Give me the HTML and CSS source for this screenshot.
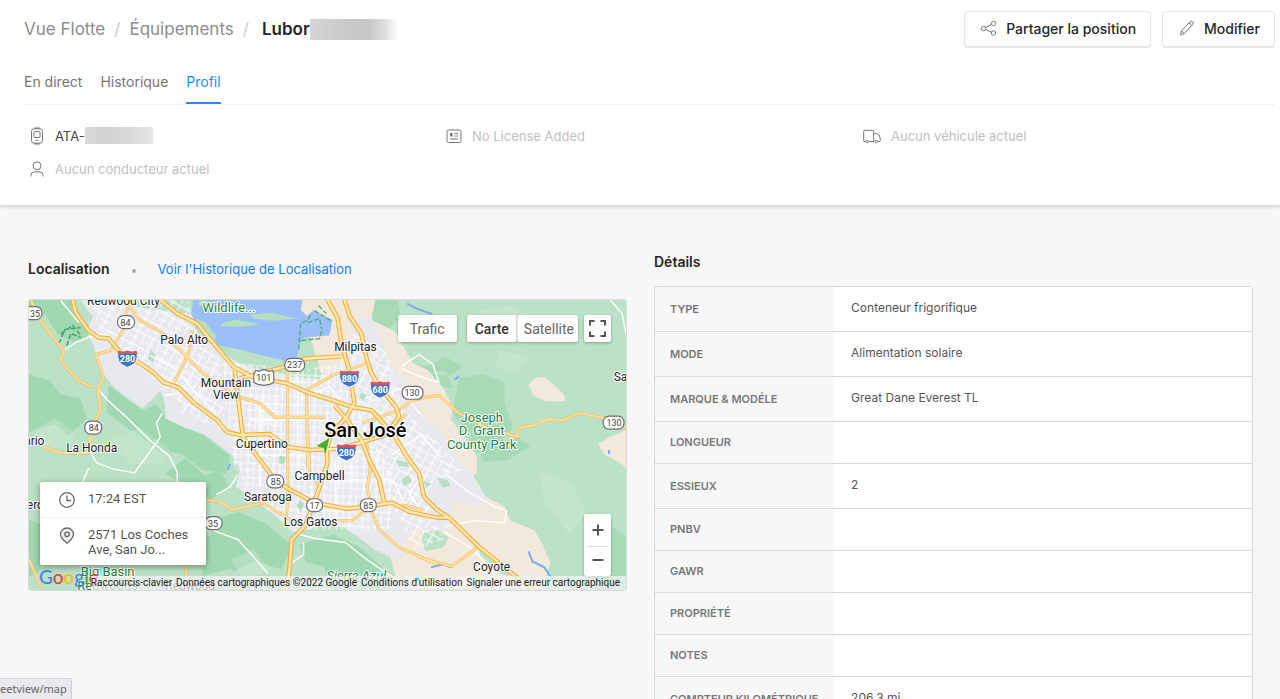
FILE: index.html
```
<!DOCTYPE html>
<html lang="fr">
  <head>
    <meta charset="UTF-8" />
    <meta name="viewport" content="width=device-width, initial-scale=1.0" />
    <title>Profil de l'équipement</title>
    <link rel="stylesheet" href="styles.css">
  </head>
  <body>
    <header class="header">
      <div class="header-top">
        <nav class="breadcrumb">
          <a href="#">Vue Flotte</a>
          <span class="slash">/</span>
          <a href="#">Équipements</a>
          <span class="slash">/</span>
          <span class="current">Lubor<span class="mask mask-name"></span></span>
        </nav>
        <div class="actions">
          <button class="button" type="button">
            <svg width="18" height="18" viewBox="0 0 18 18"><circle cx="3.5" cy="9.5" r="2.2"/><circle cx="13.5" cy="4.5" r="2.2"/><circle cx="13.5" cy="14" r="2.2"/><path d="M5.5 8.5l6-3M5.5 10.5l6 2.7"/></svg>
            Partager la position
          </button>
          <button class="button" type="button">
            <svg width="18" height="18" viewBox="0 0 18 18"><path d="M2.5 15.8l1-4L12 2.9a1.8 1.8 0 0 1 2.8 2.5L6.3 14.5zM3.5 11.8l2.8 2.7M11 4l2.8 2.6"/></svg>
            Modifier
          </button>
        </div>
      </div>

      <nav class="tabs">
        <a class="tab" href="#">En direct</a>
        <a class="tab" href="#">Historique</a>
        <a class="tab active" href="#">Profil</a>
      </nav>

      <div class="info">
        <div class="info-item strong">
          <svg width="16" height="18" viewBox="0 0 16 18"><rect x="2.5" y="1.8" width="11" height="14.4" rx="2.5"/><path d="M5 1h6M5 17h6M6.5 13.2h3"/><rect x="5" y="4.5" width="6" height="6" rx="1"/></svg>
          <span>ATA-</span><span class="mask mask-id"></span>
        </div>
        <div class="info-item">
          <svg width="16" height="18" viewBox="0 0 16 18"><rect x="1" y="3" width="14" height="12.5" rx="1.5"/><path d="M8.5 6.5H12M8.5 9H12M4 12h8"/><path class="solid" d="M4 6h2.5v3.5H4z"/></svg>
          <span>No License Added</span>
        </div>
        <div class="info-item">
          <svg width="18" height="18" viewBox="0 0 18 18"><path d="M3 14.5H1.5a.8.8 0 0 1-.8-.8V4.300a1 1 0 0 1 1-1h8a1 1 0 0 1 1 1v10.200M5.500 14.500h6M10.700 6.500h2.800q3.700.700 3.700 5v2.200q0 .8-.8.8H15"/><circle cx="4.200" cy="14.500" r="1.300"/><circle cx="13.500" cy="14.500" r="1.300"/></svg>
          <span>Aucun véhicule actuel</span>
        </div>
        <div class="info-item">
          <svg width="16" height="18" viewBox="0 0 16 18"><circle cx="8" cy="5.800" r="4"/><path d="M1.800 16.500v-1q0-3.700 4-3.700h4.400q4 0 4 3.700v1"/></svg>
          <span>Aucun conducteur actuel</span>
        </div>
      </div>
    </header>

    <main class="content">
      <section class="location">
        <div class="location-head">
          <h2>Localisation</h2>
          <span class="dot"></span>
          <a href="#">Voir l'Historique de Localisation</a>
        </div>

        <div class="map">
          <svg class="map-canvas" viewBox="28 299 600 292" preserveAspectRatio="xMidYMid slice">
            <defs>
              <pattern id="streets" width="17" height="14" patternUnits="userSpaceOnUse" patternTransform="rotate(28)">
                <path d="M0 3h17M0 10h9M5 0v14M13 3v11" fill="none" stroke="#fff" stroke-width="1"/>
              </pattern>
              <pattern id="grid" width="13" height="15" patternUnits="userSpaceOnUse" patternTransform="rotate(2)">
                <path d="M0 4h13M0 11h8M4 0v15M10 4v11" fill="none" stroke="#fff" stroke-width="1"/>
              </pattern>
              <g id="interstate">
                <path d="M-9-8Q-5-6 0-8 5-6 9-8 13 5 0 9-13 5-9-8z" fill="#3f74c6" stroke="#fff"/>
                <path d="M-9-8Q-5-6 0-8 5-6 9-8L10-4.500h-20z" fill="#dd5459"/>
              </g>
              <path id="hw280" d="M72 299L75 312 88 330 98 337 108 338 120 352 135 360 153 372 163 382 178 387 193 402 217 420 227 432 240 435 270 434 288 447 310 450 337 449 360 443 383 436 394 425 400 416 397 407 383 390 372 373 367 357 362 333 350 315 345 299"/>
              <path id="hw880" d="M328 299L338 317 342 343 350 370 355 403 347 417 332 433 327 450 328 463 320 487 315 502 305 527 292 540 290 567 287 591"/>
              <path id="hw101" d="M160 299L177 313 197 323 217 347 233 366 253 377 287 383 310 393 333 400 353 407 372 410 384 423 396 437 408 457 420 473 425 497 438 510 450 518 480 547 517 577 537 592"/>
              <path id="hw85" d="M235 370L238 397 243 437 260 460 275 480 287 488 315 503 347 509 367 507 393 503 410 512 438 518 452 518"/>
              <path id="hw87" d="M335 405L348 420 362 440 370 460 380 480 385 503"/>
              <path id="hw237" d="M240 378L263 372 283 367 307 358 342 356"/>
            </defs>

            <path fill="#bbe2c6" d="M28 299h600v292H28z"/>

            <!-- forests -->
            <g fill="#a0d8b1">
              <path d="M28 299h42l5 20 15 14-14 10-20-10-12-20-16 4zM28 374l20 6 12 14 20 4 6 20-18 18-14-12-26 8zM108 385l20 15 14 10 14-6 12 16 34 14 28 22-4 18-24-4-20-16-24-4-28-20-24-18z"/>
              <path d="M165 474l20-16 20 18 14-6 10 16-18 14-16-8zM212 520l26-8 28 12 26 22-10 24-28-8-20 10-24-18zM300 545l34-10 28 14 20 18 10 24h-60l-8-24-18-4zM28 520l12 5v45l-12 8zM206 535l16 10 8 24-28 8z"/>
              <path d="M370 299h28l4 18-14 12-14-8zM404 368l28-4 14-8 18 10-14 10-20-4zM460 378l24-4 22 8 0 20 8 26-16 18-20 8-10-20-14-22zM480 444l40-6 12 8-22 14-26 2zM606 522l22 15v54h-34l-6-26zM404 406l16-20 34 2-8-18-32 6z" opacity=".75"/>
            </g>
            <g fill="#cdebd4" opacity=".4">
              <path d="M32 430l22-12 20 14-4 16-28 2zM110 440l30-12 30 22-8 14-32 0zM230 560l24-10 16 20-24 12zM480 310l34-6 32 18-20 24-22-6zM540 470l34 14 14 30-18 20-24-32zM500 350l32 6-12 18-24-8z"/>
            </g>

            <!-- hills and dry land -->
            <path fill="#f2e9dc" d="M300 299h76l-4 20 24 12 18 32 14 6 16 18 10 20-2 12 12 16 14 22 0 16-8 8 10 12 26 14 6 14 24 10 8 14 8 18-8 26H400l-10-35-30-20-20-100-30-100zM530 385q6-10 16-8l12 10 8 8 1 6h-20l-12-6zM600 444l10-6 18-8v38l-8-6-14-8z"/>
            <path fill="#bbe2c6" d="M422 534l16-4 12 8-6 10-18 4zM480 550l20 12 12 16-10-4-20-18z"/>

            <!-- urban area -->
            <path id="city" fill="#e7e9ee" d="M80 299l6 9 6 8-6 14 7 15 4 15 6 15 12 13 15 12 12 8 11-10 7-8 5 15v13l20 10 20 7 27 20 8 15-4 17 19 13 25 20 13 13 17-3 15-5 20 3 17 12 13 10 15 7 12 6 2-20 10-14 34 2 8-12-4-18 24 6 14-4-12-22-22-26-12-22-20-16-16-32-18-22-10-30-8-16h-25l8 20-6 22-30 20-40-4-40-12-22-14-10-20-4-14z"/>
            <path fill="url(#streets)" d="M92 299h96l10 40 22 20 6 70-30-10-30-30-38-30-30-30zM350 330l36 20 20 60 60 60-30 10-10 20 20 40-30 10-30-60-30-80z"/>
            <path fill="url(#grid)" d="M222 360l80 10 50-10 10 60 30 50 0 60-60 0-30 0-50-30-20-40-4-30z"/>
            <path fill="#fff" opacity=".25" d="M255 395h25v30h-25zM330 460h28v25h-28z"/>
            <g fill="#b5dfc0">
              <path d="M150 350l5 4-2 8-5-3zM280 455l6 2-2 8-5-2zM396 460l12 2 2 5-10-1zM402 480l7-5 4 7-8 4zM300 500l5 4-4 8-4-6zM362 392l5 3-3 5-4-3zM438 478l10 2 4 6-8 2zM424 481l8 3-4 4z"/>
              <path d="M216 347l10-4 6 8-8 2z"/>
            </g>

            <!-- the bay -->
            <path fill="#9bbff8" d="M193 299l-2 14 6 16 8 12 15 4 24 5 18 5 23 5 12-2 3-13 4-8 26-2 3-16-12-6-12-12-10-2z"/>
            <path fill="#b5dfc0" d="M196 318l10 4 10 14-2 8-12-6-8-12zM222 323l12-4 14 2 12 3-16 2-22 0zM250 314l22-2 24 6-24 2-18-2zM200 299l18 3-6 6-14-4z"/>
            <path fill="#f2e9dc" d="M303 299h24l6 20-18-10-8 6-6-6z"/>
            <path d="M299 349l2-26 8-4 2-5M302 340l18-2 3-10M308 322l12-4 2 10M315 310l16 10M319 305l8 8" fill="none" stroke="#4cae72" stroke-width="1.300" stroke-dasharray="5 2"/>
            <path d="M58 343l6-14 16-2M66 345l4-12 10 4M60 333l12-8 8 10" fill="none" stroke="#3fa565" stroke-width="1.500" stroke-dasharray="5 2"/>
            <path d="M408 303l12 6 12 4 6 8M456 379l4-3M530 552l4 10 12 6 8 12M432 568l12-3 8 3M290 562l3-14M228 470l2-6M611 450v4" fill="none" stroke="#7fabf3" stroke-width="2"/>

            <!-- small roads -->
            <g fill="none" stroke="#fff" stroke-width="1.400" stroke-linejoin="round">
              <path d="M63 350l12-8 14-6 16-3M97 388l10 12 20 18 22 22 20 16 8 16 0 14M150 451l-16 22-22-4-16-6-8-14M88 468l-6 14M150 451l10-14-4-14 6-10M198 520l18 12 22 8 18 20 12 14M216 495l14-8 8-12M300 535l16 4 30 4 20 16 20 14 30 18"/>
              <path d="M402 368l18 8 20 6-6-18-14-10-18 12M448 475l20 16 28 16 12 4-2 12-30-2-30 6M612 299l12 14 4 20M420 480l-10 14 12 16M445 532l30 18 20 24 4 18M290 565l14-10 0-12M60 300l18 22"/>
              <path d="M150 355l26 14 20 24 18 18 6 18M165 395l14-2M205 385l-24 28M300 400l30-14 14 18M375 400l26-12 20 26M392 455l30-20 20 22M350 480h44l14 30M245 455h60M250 420h55M260 405v80M298 370v110M336 460v64"/>
            </g>

            <!-- main roads -->
            <g fill="none" stroke-linejoin="round">
              <g stroke="#f4bd5c" stroke-width="3">
                <path id="roads" d="M30 300l10 20 7 10 16 20-3 10 17 20 15 7M128 304l-6 26-12 20-15 4 8 23-6 11 3 22-8 15-4 28-28 0-17-6M127 304l13 16 23 13 20 20 20 20 17 12 20 12 20 6 15 14 50 0M288 363v140l-2 18M308 468l-1-78 26-15 34-12M308 430l2 40 10 18M363 423l37-13 13-10 14-3 13-2 20 18 27 14 33 10 0-9 15-3 15-6 15 1 15-7 23 4 24 10M418 557l35 10 27-20M367 440l4 30-3 17 5 26 7 17 20 18 38 17M337 521h16l14-11M207 500l13 2 13 8 30-7 24 15 18 9M402 505l22 5M192 330l-4 24-14 28M185 566l3 22M28 560l12 28M383 436l24-22"/>
              </g>
              <g stroke="#fde0a3" stroke-width="1.700">
                <use href="#roads"/>
              </g>
              <g stroke="#f5ab38" stroke-width="4.600">
                <use href="#hw280"/><use href="#hw880"/><use href="#hw101"/><use href="#hw85"/><use href="#hw87"/><use href="#hw237"/>
              </g>
              <g stroke="#ffe9b3" stroke-width="2.400">
                <use href="#hw280"/><use href="#hw880"/><use href="#hw101"/><use href="#hw85"/><use href="#hw87"/><use href="#hw237"/>
              </g>
            </g>

            <!-- shields -->
            <g fill="#fff" stroke="#6d6f73" stroke-width="1.200">
              <rect x="22" y="306" width="19" height="13" rx="6"/>
              <rect x="117" y="315" width="17" height="13" rx="6"/>
              <rect x="84" y="421" width="17" height="13" rx="6"/>
              <rect x="285" y="358" width="20" height="13" rx="6"/>
              <rect x="403" y="386" width="21" height="13" rx="6"/>
              <rect x="605" y="416" width="21" height="13" rx="6"/>
              <rect x="267" y="475" width="17" height="13" rx="6"/>
              <rect x="307" y="499" width="16" height="13" rx="6"/>
              <rect x="361" y="499" width="16" height="13" rx="6"/>
              <rect x="205" y="517" width="17" height="13" rx="6"/>
              <path d="M256 370l3 1 5-2 5 2 4-1 1 4v8l-4 2-6 1-6-1-4-2v-8z"/>
            </g>
            <g class="shield-text">
              <text x="34" y="316">35</text>
              <text x="125" y="325">84</text>
              <text x="93" y="431">84</text>
              <text x="295" y="368">237</text>
              <text x="264" y="381">101</text>
              <text x="413" y="396">130</text>
              <text x="616" y="426">130</text>
              <text x="276" y="485">85</text>
              <text x="315" y="509">17</text>
              <text x="369" y="509">85</text>
              <text x="213" y="527">35</text>
            </g>
            <use href="#interstate" x="127" y="358"/>
            <use href="#interstate" x="350" y="378"/>
            <use href="#interstate" x="381" y="389"/>
            <use href="#interstate" x="347" y="452"/>
            <g class="shield-text light">
              <text x="127" y="362">280</text>
              <text x="350" y="382">880</text>
              <text x="381" y="393">680</text>
              <text x="347" y="456">280</text>
            </g>

            <g class="place">
              <text x="123" y="304">Redwood City</text>
              <text x="184" y="343">Palo Alto</text>
              <text x="226" y="387">Mountain</text>
              <text x="226" y="399">View</text>
              <text x="356" y="351">Milpitas</text>
              <text x="262" y="448">Cupertino</text>
              <text x="320" y="480">Campbell</text>
              <text x="268" y="501">Saratoga</text>
              <text x="311" y="526">Los Gatos</text>
              <text x="91" y="452">La Honda</text>
              <text x="493" y="572">Coyote</text>
              <text x="631" y="381">Santa</text>
              <text x="28" y="445">orario</text>
              <text x="31" y="509">dero</text>
              <text x="190" y="591">Redwood</text>
            </g>
            <g class="place park">
              <text x="229" y="311">Wildlife...</text>
              <text x="483" y="422">Joseph</text>
              <text x="483" y="435">D. Grant</text>
              <text x="483" y="449">County Park</text>
              <text x="107" y="577">Big Basin</text>
              <text x="107" y="591">Redwoods</text>
              <text x="357" y="581" font-style="italic">Sierra Azul</text>
            </g>
            <text class="place city" x="366" y="437">San José</text>
            <path d="M330 438l-4 16-2-6-7-2z" fill="#43b02a"/>
          </svg>

          <div class="map-controls">
            <button class="map-button" type="button">Trafic</button>
            <div class="map-types">
              <button class="map-button selected" type="button">Carte</button>
              <button class="map-button" type="button">Satellite</button>
            </div>
            <button class="map-button square" type="button" aria-label="Plein écran">
              <svg width="17" height="17" viewBox="0 0 17 17"><path d="M1 5.500V1h4.500M11.500 1H16v4.500M16 11.500V16h-4.500M5.500 16H1v-4.500"/></svg>
            </button>
          </div>

          <div class="zoom">
            <button type="button" aria-label="Zoom avant"><svg width="12" height="12" viewBox="0 0 12 12"><path d="M6 .5v11M.5 6h11"/></svg></button>
            <button type="button" aria-label="Zoom arrière"><svg width="12" height="12" viewBox="0 0 12 12"><path d="M.5 6h11"/></svg></button>
          </div>

          <div class="map-card">
            <div class="card-row">
              <svg width="18" height="18" viewBox="0 0 18 18"><circle cx="9" cy="9" r="7.300"/><path d="M9 4.500V9.500h4"/></svg>
              <span>17:24 EST</span>
            </div>
            <div class="card-row">
              <svg width="18" height="18" viewBox="0 0 18 18"><path class="pin" d="M9 16.200Q2.500 11 2.500 7.300a6.500 6.300 0 0 1 13 0Q15.500 11 9 16.200z"/><circle cx="9" cy="7.300" r="2.200"/></svg>
              <span>2571 Los Coches<br>Ave, San Jo...</span>
            </div>
          </div>

          <div class="google"><span class="blue">G</span><span class="red">o</span><span class="yellow">o</span><span class="blue">g</span><span class="green">l</span><span class="red">e</span></div>

          <div class="attribution">
            <a href="#">Raccourcis-clavier</a>
            <span>Données cartographiques ©2022 Google</span>
            <a href="#">Conditions d'utilisation</a>
            <a href="#">Signaler une erreur cartographique</a>
          </div>
        </div>
      </section>

      <section class="details">
        <h2>Détails</h2>
        <table class="details-table">
          <tr><th scope="row">TYPE</th><td>Conteneur frigorifique</td></tr>
          <tr><th scope="row">MODE</th><td>Alimentation solaire</td></tr>
          <tr><th scope="row">MARQUE &amp; MODÉLE</th><td>Great Dane Everest TL</td></tr>
          <tr><th scope="row">LONGUEUR</th><td></td></tr>
          <tr><th scope="row">ESSIEUX</th><td>2</td></tr>
          <tr><th scope="row">PNBV</th><td></td></tr>
          <tr><th scope="row">GAWR</th><td></td></tr>
          <tr><th scope="row">PROPRIÉTÉ</th><td></td></tr>
          <tr><th scope="row">NOTES</th><td></td></tr>
          <tr><th scope="row">COMPTEUR KILOMÉTRIQUE</th><td>206.3 mi</td></tr>
        </table>
      </section>
    </main>

    <div class="status">eetview/map</div>
  </body>
</html>
```
FILE: styles.css
```
* {
  box-sizing: border-box;
}
html {
  scrollbar-width: none;
}
body {
  height: 100vh;
  margin: 0;
  overflow: hidden auto;
  scrollbar-width: none;
  background: #f7f7f7;
  color: #262626;
  font-family: Inter, "Liberation Sans", sans-serif;
  font-size: 14px;
  line-height: 20px;
}
a {
  color: #1080f0;
  text-decoration: none;
}
button {
  font-family: inherit;
  cursor: pointer;
}
svg {
  fill: none;
  stroke: #777;
  flex: none;
}
h2 {
  margin: 0;
  font-size: 14px;
  font-weight: 600;
}

/* header */
.header {
  padding: 11px 5px 20px 24px;
  background: #fff;
  border-bottom: 1px solid #d8d8d8;
  box-shadow: 0 1px 4px rgba(0, 0, 0, 0.15);
}
.header-top {
  display: flex;
  align-items: center;
  justify-content: space-between;
}
.breadcrumb {
  display: flex;
  align-items: center;
  gap: 9px;
  font-size: 17px;
}
.breadcrumb a {
  color: #8c8c8c;
}
.slash {
  color: #ccc;
}
.current {
  display: flex;
  align-items: center;
  margin-left: 4px;
  font-weight: 600;
}
.mask {
  display: inline-block;
}
.mask-name {
  width: 88px;
  height: 21px;
  background: linear-gradient(90deg, #d6d6d6, #c9c9c9 40%, #c6c6c6 65%, #ddd 85%, #fff);
}
.mask-id {
  width: 68px;
  height: 17px;
  background: linear-gradient(90deg, #d9d9d9, #d2d2d2 30%, #d8d8d8 60%, #e6e6e6);
}
.actions {
  display: flex;
  gap: 11px;
}
.button {
  display: flex;
  align-items: center;
  gap: 8px;
  height: 36px;
  padding: 0 14px 2px 15px;
  background: #fff;
  border: 1px solid #e6e6e6;
  border-radius: 4px;
  box-shadow: 0 1px 1px rgba(0, 0, 0, 0.1);
  color: #262626;
  font-size: 14px;
  font-weight: 500;
}
.tabs {
  display: flex;
  gap: 18px;
  margin-top: 25px;
  border-bottom: 1px solid #f0f0f0;
}
.tab {
  padding-bottom: 10px;
  border-bottom: 2px solid transparent;
  color: #777;
}
.tab.active {
  border-color: #1890ff;
  color: #1890ff;
}
.info {
  display: grid;
  grid-template-columns: repeat(3, 1fr);
  padding-top: 14px;
  font-size: 13px;
}
.info-item {
  display: flex;
  align-items: center;
  gap: 10px;
  height: 33px;
  padding-left: 5px;
  color: #bfbfbf;
}
.info-item.strong {
  color: #444;
}
.info-item .mask {
  margin-left: -10px;
}
.info-item .solid {
  fill: #777;
  stroke: none;
}

/* content */
.content {
  display: grid;
  grid-template-columns: 1fr 1fr;
  gap: 27px;
  padding: 46px 27px 0 28px;
}
.location {
  padding-top: 7px;
}
.location-head {
  display: flex;
  align-items: center;
  gap: 22px;
  margin-bottom: 20px;
}
.location-head a {
  font-size: 13px;
}
.dot {
  width: 4px;
  height: 4px;
  margin-top: 4px;
  border-radius: 50%;
  background: #aaa;
}

.map {
  position: relative;
  height: 292px;
  overflow: hidden;
  border: 1px solid #d9d9d9;
  border-radius: 3px;
  font-family: Roboto, "Liberation Sans", sans-serif;
}
.map-canvas {
  display: block;
  width: 100%;
  height: 100%;
  stroke: none;
}
.place {
  fill: #202124;
  stroke: #fff;
  stroke-width: 2px;
  paint-order: stroke;
  stroke-linejoin: round;
  text-anchor: middle;
  font-size: 12px;
}
.park {
  fill: #1e8040;
  font-size: 13px;
}
.city {
  fill: #000;
  font-size: 20px;
  font-weight: 500;
}
.shield-text {
  fill: #444;
  text-anchor: middle;
  font-size: 9px;
}
.shield-text.light {
  fill: #fff;
  font-weight: 700;
}
.map-controls {
  position: absolute;
  top: 15px;
  right: 15px;
  display: flex;
  gap: 6px;
}
.map-types {
  display: flex;
  margin-left: 4px;
}
.map-button {
  height: 27px;
  padding: 0 7px;
  background: #fff;
  border: 0;
  border-radius: 2px;
  box-shadow: 0 1px 3px rgba(0, 0, 0, 0.3);
  color: #666;
  font-size: 14px;
}
.map-controls > .map-button {
  padding: 0 12px;
}
.map-types .map-button + .map-button {
  border-left: 1px solid #ddd;
  padding: 0 4px 0 6px;
}
.map-button.selected {
  padding: 0 8px;
  color: #333;
  font-weight: 500;
}
.map-controls > .square {
  display: flex;
  align-items: center;
  justify-content: center;
  width: 27px;
  padding: 0;
}
.square svg {
  stroke: #555;
  stroke-width: 2;
}
.zoom {
  position: absolute;
  right: 15px;
  bottom: 14px;
  width: 27px;
  padding: 0 3px;
  background: #fff;
  border-radius: 2px;
  box-shadow: 0 1px 3px rgba(0, 0, 0, 0.3);
}
.zoom button {
  display: flex;
  align-items: center;
  justify-content: center;
  width: 100%;
  height: 32px;
  padding: 0;
  background: none;
  border: 0;
}
.zoom button + button {
  height: 30px;
  padding-bottom: 4px;
  border-top: 1px solid #ddd;
}
.zoom svg {
  stroke: #555;
  stroke-width: 2;
}
.map-card {
  position: absolute;
  left: 11px;
  bottom: 25px;
  width: 166px;
  background: #fff;
  border-radius: 2px;
  box-shadow: 0 2px 6px rgba(0, 0, 0, 0.4);
  color: #555;
  font-size: 13px;
  line-height: 15px;
  white-space: nowrap;
}
.card-row {
  display: flex;
  gap: 12px;
  padding: 9px 18px 8px;
}
.card-row + .card-row {
  border-top: 1px solid #eee;
}
.card-row svg {
  stroke-width: 1.3;
  stroke: #666;
}
.card-row .pin {
  fill: #eee;
}
.google {
  position: absolute;
  left: 10px;
  bottom: 1px;
  font-family: Lato, Roboto, sans-serif;
  font-size: 19px;
  font-weight: 500;
  line-height: 24px;
}
.blue {
  color: #4285f4;
}
.red {
  color: #ea4335;
}
.yellow {
  color: #fbbc05;
}
.green {
  color: #34a853;
}
.attribution {
  position: absolute;
  right: 0;
  bottom: 0;
  display: flex;
  gap: 4px;
  padding: 0 6px 0 0;
  background: rgba(245, 245, 245, 0.7);
  color: #222;
  font-size: 10px;
  line-height: 14px;
  white-space: nowrap;
}
.attribution a {
  color: inherit;
}

/* details */
.details h2 {
  margin-bottom: 14px;
}
.details-table {
  width: 100%;
  border: 1px solid #d9d9d9;
  border-radius: 3px;
  border-spacing: 0;
}
.details-table th,
.details-table td {
  padding: 10px 17px 12px;
  border-bottom: 1px solid #d9d9d9;
  text-align: left;
}
.details-table th {
  width: 30%;
  padding: 11px 15px;
  color: #777;
  font-size: 11px;
  font-weight: 600;
  line-height: 19px;
  white-space: nowrap;
}
.details-table td {
  background: #fff;
  color: #555;
  font-size: 12px;
  line-height: 22px;
}

/* link target hint */
.status {
  position: fixed;
  left: 0;
  bottom: 0;
  width: 72px;
  height: 21px;
  overflow: hidden;
  background: #e8eaed;
  border: 1px solid #d0d2d5;
  border-width: 1px 1px 0 0;
  border-radius: 0 3px 0 0;
  color: #666;
  font-family: "Noto Sans", sans-serif;
  font-size: 11px;
  white-space: nowrap;
}
```
